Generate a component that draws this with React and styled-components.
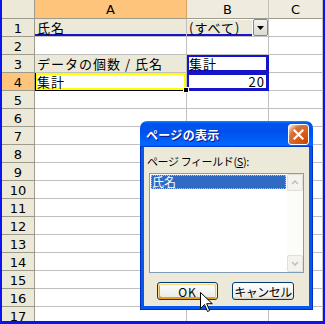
import styled, { createGlobalStyle } from 'styled-components'

const GlobalStyle = createGlobalStyle`
  html, body {
    margin: 0;
    padding: 0;
    background: #fff;
    overflow: hidden;
  }
  body {
    font-family: 'Noto Sans CJK JP', 'Liberation Sans', sans-serif;
  }
`

const COLUMNS = [
  { key: 'A', width: 152 },
  { key: 'B', width: 82 },
  { key: 'C', width: 54 },
]

const ROW_COUNT = 17
const ACTIVE_ROW = 4
const ACTIVE_COL = 'A'

export default function App() {
  const rows = Array.from({ length: ROW_COUNT }, (_, i) => i + 1)

  const renderCell = (row, col) => {
    const id = `${col}${row}`
    switch (id) {
      case 'A1':
        return (
          <Cell key={id} $field $underline>
            氏名
          </Cell>
        )
      case 'B1':
        return (
          <Cell key={id} $flush>
            <PageFieldLabel>(すべて)</PageFieldLabel>
            <DropButton>
              <svg width='7' height='4' viewBox='0 0 7 4'>
                <path d='M0 0h7L3.5 4z' fill='#000' />
              </svg>
            </DropButton>
          </Cell>
        )
      case 'A3':
        return (
          <Cell key={id} $field>
            データの個数 / 氏名
          </Cell>
        )
      case 'B3':
        return (
          <Cell key={id} $box>
            集計
          </Cell>
        )
      case 'A4':
        return (
          <Cell key={id} $active>
            集計
          </Cell>
        )
      case 'B4':
        return (
          <Cell key={id} $box $right>
            20
          </Cell>
        )
      default:
        return <Cell key={id} />
    }
  }

  return (
    <>
      <GlobalStyle />
      <Frame>
        <Sheet>
          <Corner />
          {COLUMNS.map((c) => (
            <ColHead key={c.key} $active={c.key === ACTIVE_COL}>
              {c.key}
            </ColHead>
          ))}
          {rows.map((r) => [
            <RowHead key={`h${r}`} $active={r === ACTIVE_ROW}>
              {r}
            </RowHead>,
            ...COLUMNS.map((c) => renderCell(r, c.key)),
          ])}
        </Sheet>

        <Dialog>
          <TitleBar>
            <Title>ページの表示</Title>
            <CloseButton>
              <svg width='11' height='11' viewBox='0 0 11 11'>
                <path
                  d='M1.5 1.5l8 8M9.5 1.5l-8 8'
                  stroke='#fff'
                  strokeWidth='2.2'
                  strokeLinecap='square'
                />
              </svg>
            </CloseButton>
          </TitleBar>
          <DialogFrame>
            <DialogBody>
              <FieldLabel>
                ページ フィールド(<u>S</u>):
              </FieldLabel>
              <ListBox>
                <ListItems>
                  <ListItem $selected>氏名</ListItem>
                </ListItems>
                <ScrollBar>
                  <ScrollArrow>
                    <svg width='8' height='5' viewBox='0 0 8 5'>
                      <path
                        d='M1 4l3-3 3 3'
                        stroke='#c5c2b2'
                        strokeWidth='1.6'
                        fill='none'
                      />
                    </svg>
                  </ScrollArrow>
                  <ScrollTrack />
                  <ScrollArrow>
                    <svg width='8' height='5' viewBox='0 0 8 5'>
                      <path
                        d='M1 1l3 3 3-3'
                        stroke='#c5c2b2'
                        strokeWidth='1.6'
                        fill='none'
                      />
                    </svg>
                  </ScrollArrow>
                </ScrollBar>
              </ListBox>
              <ButtonRow>
                <Button $default>OK</Button>
                <Button>キャンセル</Button>
              </ButtonRow>
            </DialogBody>
          </DialogFrame>
        </Dialog>

        <Pointer width='13' height='21' viewBox='0 0 13 21'>
          <path
            d='M0.5 0.5v16l4-4 3 7 2.2-1-3-6.8h5.6z'
            fill='#fff'
            stroke='#000'
            strokeWidth='1'
            strokeLinejoin='miter'
          />
        </Pointer>
      </Frame>
    </>
  )
}

const Frame = styled.div`
  position: relative;
  width: 325px;
  height: 324px;
  box-sizing: border-box;
  padding: 0 2px 3px 2px;
  background: #0a14f0;
  overflow: hidden;
`

const Sheet = styled.div`
  display: grid;
  grid-template-columns: 33px ${COLUMNS.map((c) => `${c.width}px`).join(' ')};
  grid-template-rows: 19px repeat(${ROW_COUNT}, 18px);
  height: 321px;
  overflow: hidden;
  background: #fff;
  color: #000;
  font-size: 13px;
`

const headBase = `
  box-sizing: border-box;
  display: flex;
  align-items: center;
  justify-content: center;
  font-family: 'DejaVu Sans', 'Liberation Sans', sans-serif;
  font-size: 13px;
  color: #000;
`

const Corner = styled.div`
  ${headBase}
  background: #ece9d8;
  border-right: 1px solid #9d9b8c;
  border-bottom: 1px solid #9d9b8c;
`

const ColHead = styled.div`
  ${headBase}
  background: ${(p) => (p.$active ? '#ffc47c' : '#efecdf')};
  border-right: 1px solid ${(p) => (p.$active ? '#d6a35c' : '#c4c1b2')};
  border-bottom: 1px solid #9d9b8c;
  padding-top: 1px;
`

const RowHead = styled.div`
  ${headBase}
  background: ${(p) => (p.$active ? '#ffc47c' : '#ece9d8')};
  border-right: 1px solid #9d9b8c;
  border-bottom: 1px solid #9d9b8c;
  padding-top: 1px;
`

const Cell = styled.div`
  position: relative;
  box-sizing: border-box;
  display: flex;
  align-items: flex-end;
  justify-content: ${(p) => (p.$right ? 'flex-end' : 'flex-start')};
  padding: ${(p) => (p.$flush ? '0' : p.$right ? '0 3px 0 2px' : '0 2px')};
  background: ${(p) => (p.$field ? '#ece9d8' : '#fff')};
  border-right: 1px solid ${(p) => (p.$box ? '#1414c8' : '#c0c0c0')};
  border-bottom: 1px solid
    ${(p) => (p.$box ? '#1414c8' : p.$active ? '#000' : '#c0c0c0')};
  line-height: 16px;
  letter-spacing: 1px;
  white-space: nowrap;
  z-index: ${(p) => (p.$active ? 2 : 1)};
  box-shadow: ${(p) =>
    p.$box
      ? 'inset 0 0 0 2px #1414c8'
      : p.$active
        ? 'inset 1px 0 0 #000, inset 0 0 0 2px #ffff00'
        : p.$underline
          ? 'inset 0 -2px 0 #1414c8'
          : 'none'};

  ${(p) =>
    p.$active &&
    `
    &::after {
      content: '';
      position: absolute;
      right: -3px;
      bottom: -3px;
      width: 4px;
      height: 4px;
      background: #000;
      border: 1px solid #fff;
    }
  `}
`

const PageFieldLabel = styled.span`
  flex: 1;
  display: flex;
  align-items: flex-end;
  padding: 0 2px;
  background: #ece9d8;
  box-shadow: inset 0 -2px 0 #1414c8;
  line-height: 16px;
`

const DropButton = styled.span`
  box-sizing: border-box;
  width: 15px;
  height: 17px;
  margin: 0 0 0 1px;
  display: flex;
  align-items: center;
  justify-content: center;
  background: linear-gradient(#f4f3ee, #dcdad0);
  border: 1px solid #7b8a99;
  border-radius: 2px;
`

const Dialog = styled.div`
  position: absolute;
  left: 140px;
  top: 121px;
  width: 173px;
  height: 189px;
  display: flex;
  flex-direction: column;
  font-family: 'Noto Sans CJK JP', sans-serif;
  z-index: 5;
`

const TitleBar = styled.div`
  height: 26px;
  flex: none;
  box-sizing: border-box;
  display: flex;
  align-items: center;
  justify-content: space-between;
  padding: 0 4px 0 6px;
  border-radius: 7px 7px 0 0;
  background: linear-gradient(
    180deg,
    #0997ff 0%,
    #0053ee 8%,
    #0050ee 40%,
    #0066ff 88%,
    #0066ff 93%,
    #005bff 95%,
    #003dd7 96%,
    #003dd7 100%
  );
`

const Title = styled.span`
  color: #fff;
  font-size: 12px;
  font-weight: 700;
  letter-spacing: 0.3px;
  text-shadow: 1px 1px #0f1089;
`

const CloseButton = styled.span`
  box-sizing: border-box;
  width: 21px;
  height: 21px;
  display: flex;
  align-items: center;
  justify-content: center;
  border: 1px solid #fff;
  border-radius: 3px;
  background: radial-gradient(
    circle at 90% 90%,
    #cc4600 0%,
    #dc6527 55%,
    #cd7546 70%,
    #ffccb2 90%,
    #fff 100%
  );
`

const DialogFrame = styled.div`
  flex: 1;
  display: flex;
  padding: 0 3px 3px;
  background: #0558eb;
  border: 1px solid #0030c0;
  border-top: none;
`

const DialogBody = styled.div`
  flex: 1;
  display: flex;
  flex-direction: column;
  background: #ece9d8;
  padding-top: 6px;
`

const FieldLabel = styled.div`
  margin-left: 3px;
  height: 16px;
  font-size: 11px;
  line-height: 16px;
  letter-spacing: -0.4px;
  color: #000;

  u {
    text-underline-offset: 1px;
  }
`

const ListBox = styled.div`
  box-sizing: border-box;
  margin: 4px 0 0 5px;
  width: 155px;
  height: 100px;
  display: flex;
  background: #fff;
  border: 1px solid #7f9db9;
`

const ListItems = styled.div`
  flex: 1;
  padding: 1px;
`

const ListItem = styled.div`
  box-sizing: border-box;
  height: 14px;
  padding-left: 1px;
  font-size: 12px;
  line-height: 13px;
  color: ${(p) => (p.$selected ? '#fff' : '#000')};
  background: ${(p) => (p.$selected ? '#316ac5' : 'transparent')};
  outline: ${(p) => (p.$selected ? '1px dotted #e8b860' : 'none')};
  outline-offset: -1px;
`

const ScrollBar = styled.div`
  width: 16px;
  display: flex;
  flex-direction: column;
  background: #fcfcf9;
`

const ScrollArrow = styled.div`
  box-sizing: border-box;
  height: 17px;
  display: flex;
  align-items: center;
  justify-content: center;
  background: #f4f3ee;
  border: 1px solid #e2e0d4;
  border-radius: 2px;
`

const ScrollTrack = styled.div`
  flex: 1;
`

const ButtonRow = styled.div`
  display: flex;
  gap: 14px;
  margin-top: 9px;
  padding-left: 13px;
`

const Button = styled.div`
  box-sizing: border-box;
  width: ${(p) => (p.$default ? '61px' : '62px')};
  height: 18px;
  display: flex;
  align-items: center;
  justify-content: center;
  font-size: 12px;
  letter-spacing: ${(p) => (p.$default ? '1px' : '-0.5px')};
  color: #000;
  border: 1px solid #003c74;
  border-radius: 3px;
  background: linear-gradient(180deg, #fff, #ecebe6 86%, #d6d0c5);
  box-shadow: ${(p) =>
    p.$default
      ? 'inset -1px 1px #fff0cf, inset 1px 2px #fdd889, inset -2px 2px #fbc761, inset 2px -2px #e5a01a'
      : 'none'};
`

const Pointer = styled.svg`
  position: absolute;
  left: 200px;
  top: 292px;
  z-index: 10;
`
